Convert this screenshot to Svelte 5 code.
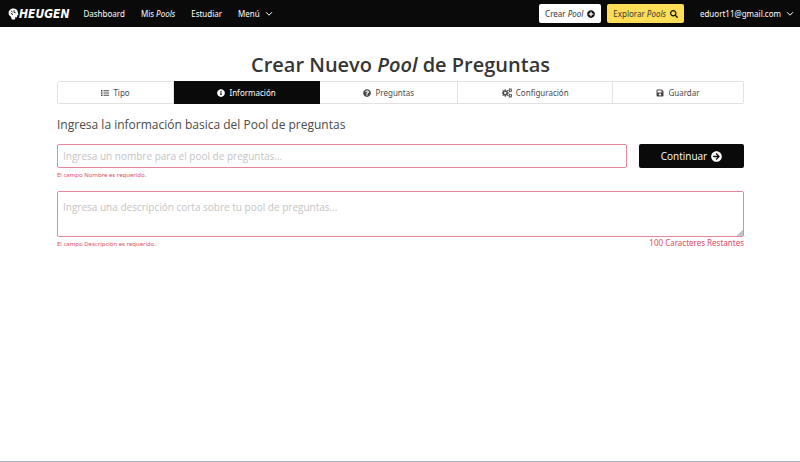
<script>
  const disc = 'M256 8C119 8 8 119 8 256s111 248 248 248 248-111 248-248S393 8 256 8z';
  const icons = {
    list: 'M16 64h64a16 16 0 0 1 16 16v64a16 16 0 0 1-16 16H16a16 16 0 0 1-16-16V80a16 16 0 0 1 16-16zm0 144h64a16 16 0 0 1 16 16v64a16 16 0 0 1-16 16H16a16 16 0 0 1-16-16v-64a16 16 0 0 1 16-16zm0 144h64a16 16 0 0 1 16 16v64a16 16 0 0 1-16 16H16a16 16 0 0 1-16-16v-64a16 16 0 0 1 16-16zM160 80h336a16 16 0 0 1 16 16v32a16 16 0 0 1-16 16H160zm0 144h352v64H160zm0 144h352v64H160z',
    info: 'M256 8C119.043 8 8 119.083 8 256c0 136.997 111.043 248 248 248s248-111.003 248-248C504 119.083 392.957 8 256 8zm0 110c23.196 0 42 18.804 42 42s-18.804 42-42 42-42-18.804-42-42 18.804-42 42-42zm56 254c0 6.627-5.373 12-12 12h-88c-6.627 0-12-5.373-12-12v-24c0-6.627 5.373-12 12-12h12v-64h-12c-6.627 0-12-5.373-12-12v-24c0-6.627 5.373-12 12-12h64c6.627 0 12 5.373 12 12v100h12c6.627 0 12 5.373 12 12v24z',
    question: 'M504 256c0 136.997-111.043 248-248 248S8 392.997 8 256C8 119.083 119.043 8 256 8s248 111.083 248 248zM262.655 90c-54.497 0-89.255 22.957-116.549 63.758-3.536 5.286-2.353 12.415 2.715 16.258l34.699 26.31c5.205 3.947 12.621 3.008 16.665-2.122 17.864-22.658 30.113-35.797 57.303-35.797 20.429 0 45.698 13.148 45.698 32.958 0 14.976-12.363 22.667-32.534 33.976C247.128 238.528 216 254.941 216 296v4c0 6.627 5.373 12 12 12h56c6.627 0 12-5.373 12-12v-1.333c0-28.462 83.186-29.647 83.186-106.667 0-58.002-60.165-102-116.531-102zM256 338c-25.365 0-46 20.635-46 46 0 25.364 20.635 46 46 46s46-20.636 46-46c0-25.365-20.635-46-46-46z',
    cogs: gear(166, 256, 190, 138, 58, 8) + gear(426, 116, 112, 80, 34, 6) + gear(426, 396, 112, 80, 34, 6),
    save: 'M465.941 129.941l-83.882-83.882A48 48 0 0 0 348.118 32H80C53.49 32 32 53.49 32 80v352c0 26.51 21.49 48 48 48h352c26.51 0 48-21.49 48-48V163.882a48 48 0 0 0-14.059-33.941zM256 416c-35.346 0-64-28.654-64-64 0-35.346 28.654-64 64-64s64 28.654 64 64c0 35.346-28.654 64-64 64zm96-304.52V212c0 6.627-5.373 12-12 12H108c-6.627 0-12-5.373-12-12V108c0-6.627 5.373-12 12-12h228.52c3.183 0 6.235 1.264 8.485 3.515l3.48 3.48A11.996 11.996 0 0 1 352 111.48z',
    plus: disc + 'm144 276c0 6.6-5.4 12-12 12h-92v92c0 6.6-5.4 12-12 12h-56c-6.6 0-12-5.4-12-12v-92h-92c-6.6 0-12-5.4-12-12v-56c0-6.6 5.4-12 12-12h92v-92c0-6.6 5.4-12 12-12h56c6.6 0 12 5.4 12 12v92h92c6.6 0 12 5.4 12 12v56z',
    search: 'M505 442.7L405.3 343c-4.5-4.5-10.6-7-17-7H372c27.6-35.3 44-79.7 44-128C416 93.1 322.9 0 208 0S0 93.1 0 208s93.1 208 208 208c48.3 0 92.7-16.4 128-44v16.3c0 6.4 2.5 12.5 7 17l99.7 99.7c9.4 9.4 24.6 9.4 33.9 0l28.3-28.3c9.4-9.4 9.4-24.6.1-34zM208 336c-70.7 0-128-57.2-128-128 0-70.7 57.2-128 128-128 70.7 0 128 57.2 128 128 0 70.7-57.2 128-128 128z',
    arrow: 'M256 8c137 0 248 111 248 248S393 504 256 504 8 393 8 256 119 8 256 8zm-28.9 143.6l75.5 72.4H120c-13.3 0-24 10.7-24 24v16c0 13.3 10.7 24 24 24h182.6l-75.5 72.4c-9.7 9.3-9.9 24.8-.4 34.3l11 10.9c9.4 9.4 24.6 9.4 33.9 0L404.3 273c9.4-9.4 9.4-24.6 0-33.9L271.6 106.3c-9.4-9.4-24.6-9.4-33.9 0l-11 10.9c-9.5 9.6-9.3 25.1.4 34.4z'
  };

  // A toothed wheel: each tooth takes half of its share of the circle.
  function gear(cx, cy, outer, inner, hole, teeth) {
    const step = (Math.PI * 2) / teeth;
    const points = [];
    for (let i = 0; i < teeth; i++) {
      for (const [part, r] of [[-0.3, inner], [-0.2, outer], [0.2, outer], [0.3, inner]]) {
        const a = (i + part) * step;
        points.push(`${(cx + r * Math.cos(a)).toFixed(1)} ${(cy + r * Math.sin(a)).toFixed(1)}`);
      }
    }
    return `M${points.join('L')}zM${cx - hole} ${cy}a${hole} ${hole} 0 1 0 ${hole * 2} 0a${hole} ${hole} 0 1 0 ${-hole * 2} 0z`;
  }

  const steps = [
    { label: 'Tipo', icon: 'list' },
    { label: 'Información', icon: 'info' },
    { label: 'Preguntas', icon: 'question' },
    { label: 'Configuración', icon: 'cogs' },
    { label: 'Guardar', icon: 'save' }
  ];
  const limit = 100;
  let active = $state('Información');
  let name = $state('');
  let description = $state('');
  let remaining = $derived(limit - description.length);
</script>

{#snippet icon(id)}
  <svg class="icon" class:wide={id === 'cogs'} viewBox="0 0 512 512" aria-hidden="true"><path fill-rule="evenodd" d={icons[id]} /></svg>
{/snippet}

{#snippet chevron()}
  <svg class="chevron" viewBox="0 0 8 6" aria-hidden="true"><path d="M1 1.2l3 3 3-3" /></svg>
{/snippet}

<div class="page">
  <header class="navbar">
    <a class="brand" href="#inicio">
      <svg class="head" viewBox="0 0 20 22" aria-hidden="true">
        <path class="skull" d="M10 1C5 1 1 4.500 1 9c0 3 1.500 5 4 6.500L7 21h6v-4h3.500v-3l2.500-1.500L18 8c0-4-4-7-8-7z" />
        <path class="brain" d="M6 5l2 3M11 4v4l3 1M5 10l3 1v2" />
      </svg>
      <span>HEUGEN</span>
    </a>
    <nav>
      <a href="#dashboard">Dashboard</a>
      <a href="#mis-pools">Mis <em>Pools</em></a>
      <a href="#estudiar">Estudiar</a>
      <button class="menu" type="button">Menú {@render chevron()}</button>
    </nav>
    <div class="actions">
      <a class="action light" href="#crear"><span>Crear <em>Pool</em></span>{@render icon('plus')}</a>
      <a class="action yellow" href="#explorar"><span>Explorar <em>Pools</em></span>{@render icon('search')}</a>
      <button class="menu account" type="button">eduort11@gmail.com {@render chevron()}</button>
    </div>
  </header>

  <main>
    <h1>Crear Nuevo <em>Pool</em> de Preguntas</h1>
    <div class="tabs">
      {#each steps as step}
        <button type="button" class:active={active === step.label} onclick={() => (active = step.label)}>
          {@render icon(step.icon)}{step.label}
        </button>
      {/each}
    </div>

    <h2>Ingresa la información basica del Pool de preguntas</h2>
    <form onsubmit={(e) => e.preventDefault()}>
      <div class="row">
        <div class="field">
          <input type="text" aria-label="Nombre" aria-describedby="error-nombre" placeholder="Ingresa un nombre para el pool de preguntas..." bind:value={name} />
          <p class="help" id="error-nombre">El campo Nombre es requerido.</p>
        </div>
        <button class="continue" type="submit">Continuar {@render icon('arrow')}</button>
      </div>
      <textarea aria-label="Descripción" aria-describedby="error-descripcion" maxlength={limit} placeholder="Ingresa una descripción corta sobre tu pool de preguntas..." bind:value={description}></textarea>
      <div class="notes">
        <p class="help" id="error-descripcion">El campo Descripción es requerido.</p>
        <p class="count">{remaining} Caracteres Restantes</p>
      </div>
    </form>
  </main>
</div>

<style>
  .page {
    box-sizing: border-box;
    min-height: 100vh;
    background: #fff;
    border-bottom: 1px solid #9db6cc;
    color: #363636;
    font: 8px/12px "Noto Sans", "Open Sans", sans-serif;
  }
  a { color: inherit; text-decoration: none; }
  button, input, textarea { font: inherit; margin: 0; box-sizing: border-box; }
  button { cursor: pointer; }
  p, h1, h2 { margin: 0; }
  .icon { width: 8px; height: 8px; fill: currentColor; flex: none; }
  .icon.wide { width: 10px; height: 10px; }
  .chevron { width: 8px; height: 6px; fill: none; stroke: currentColor; stroke-width: 1; }

  .navbar {
    display: flex;
    align-items: center;
    height: 27px;
    padding: 0 6px 0 8px;
    background: #0a0a0a;
    color: #fff;
  }
  .brand {
    display: flex;
    align-items: center;
    font: italic bold 12px/14px "DejaVu Sans Condensed", "DejaVu Sans", sans-serif;
  }
  .head { width: 11px; height: 12px; }
  .skull { fill: #fff; }
  .brain { fill: none; stroke: #0a0a0a; stroke-width: 1.6; }
  nav { display: flex; align-items: center; gap: 16px; margin-left: 14px; }
  .menu {
    display: flex;
    align-items: center;
    gap: 5px;
    padding: 0;
    border: 0;
    background: none;
    color: inherit;
  }
  .actions { display: flex; align-items: center; gap: 6px; margin-left: auto; }
  .account { margin-left: 10px; }
  .action {
    display: flex;
    align-items: center;
    gap: 4px;
    height: 19px;
    padding: 0 6px;
    border-radius: 2px;
  }
  .light { background: #fff; color: #363636; }
  .yellow { background: #ffdd57; color: #363636; }
  .action .icon { color: #111; }

  main { padding: 24px 56px 0 57px; }
  h1, h2, input, textarea, .continue { font-family: "Open Sans", "Noto Sans", sans-serif; }
  h1 { font-size: 20px; line-height: 28px; font-weight: 600; text-align: center; }
  .tabs { display: flex; margin-top: 2px; }
  .tabs button {
    display: flex;
    flex: 1 0 auto;
    align-items: center;
    justify-content: center;
    gap: 4px;
    height: 23px;
    padding: 0 8px;
    border: 1px solid #e2e2e2;
    border-left-width: 0;
    background: #fff;
    color: #4a4a4a;
  }
  .tabs button:first-child { border-left-width: 1px; border-radius: 2px 0 0 2px; }
  .tabs button:last-child { border-radius: 0 2px 2px 0; }
  .tabs button.active { background: #0a0a0a; border-color: #0a0a0a; color: #fff; }

  h2 { margin-top: 12px; font-size: 12px; line-height: 18px; font-weight: 400; color: #4a4a4a; }
  form { margin-top: 10px; }
  .row { display: flex; align-items: flex-start; gap: 12px; }
  .field { flex: 1; }
  input, textarea {
    display: block;
    width: 100%;
    border: 1px solid #e8879c;
    border-radius: 2px;
    outline: 0;
    background: #fff;
    color: #363636;
    font-size: 10px;
    line-height: 14px;
  }
  input { height: 24px; padding: 0 5px; }
  textarea { height: 46px; margin-top: 10px; padding: 8px 5px; resize: vertical; }
  textarea::-webkit-resizer {
    background: linear-gradient(135deg, transparent 80%, #c4c4c4 80%);
  }
  input::placeholder, textarea::placeholder { color: #c4c4c4; opacity: 1; }
  .continue {
    display: flex;
    align-items: center;
    justify-content: center;
    gap: 4px;
    width: 105px;
    height: 24px;
    border: 0;
    border-radius: 2px;
    background: #0a0a0a;
    color: #fff;
    font-size: 10px;
  }
  .continue .icon { width: 11px; height: 11px; }
  .help { margin-top: 1px; font-size: 6px; line-height: 12px; color: #e24a66; }
  .notes { display: flex; justify-content: space-between; }
  .count { color: #e24a66; }
</style>
